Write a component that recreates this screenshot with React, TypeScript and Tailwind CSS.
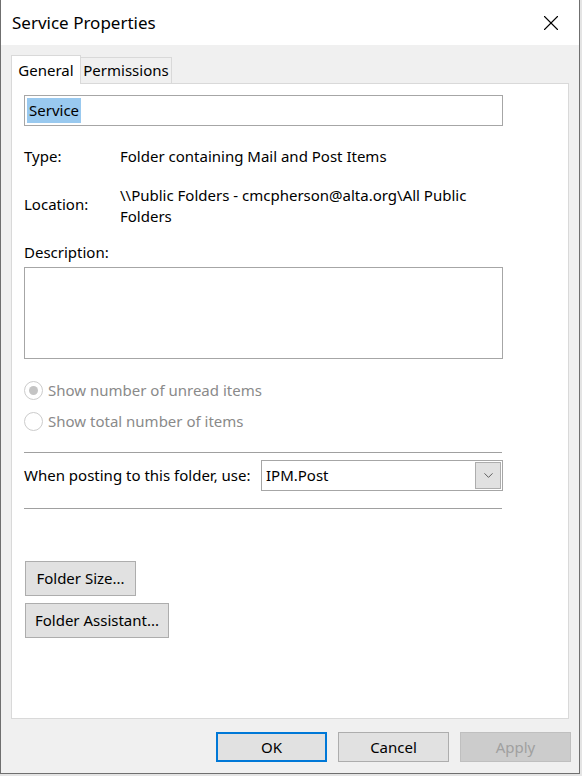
import { X, ChevronDown } from "lucide-react";

const font = "font-['Segoe_UI','Noto_Sans','Open_Sans',sans-serif]";

function Radio({ checked, label }: { checked?: boolean; label: string }) {
  return (
    <div className="flex items-center h-[22px]">
      <span className="w-[19px] h-[19px] rounded-full border border-[#cccccc] bg-white flex items-center justify-center">
        {checked && <span className="w-[9px] h-[9px] rounded-full bg-[#c4c4c4]" />}
      </span>
      <span className="ml-[5px] text-[15px] text-[#8a8a8a]">{label}</span>
    </div>
  );
}

function DialogButton({
  label,
  variant = "normal",
}: {
  label: string;
  variant?: "normal" | "default" | "disabled";
}) {
  const base = "h-[30px] w-[111px] text-[15px] flex items-center justify-center";
  if (variant === "default")
    return <button className={`${base} bg-[#e1e1e1] border-2 border-[#0078d7] text-black`}>{label}</button>;
  if (variant === "disabled")
    return <button className={`${base} bg-[#cccccc] border border-[#bfbfbf] text-[#a0a0a0]`}>{label}</button>;
  return <button className={`${base} bg-[#e1e1e1] border border-[#adadad] text-black`}>{label}</button>;
}

export default function App() {
  return (
    <div className={`w-[582px] h-[776px] bg-[#e4e4e4] ${font}`}>
      <div className="w-[580px] h-[774px] border-x border-b border-[#6f6f6f] flex flex-col bg-[#f0f0f0]">
        {/* title bar */}
        <div className="h-[45px] bg-white flex items-center justify-between pl-[11px] pr-[15px] shrink-0">
          <span className="text-[17px] text-black">Service Properties</span>
          <X className="w-[26px] h-[26px] text-black" strokeWidth={1} />
        </div>

        <div className="flex-1 flex flex-col pl-[10px] pr-[8px]">
          {/* tabs */}
          <div className="flex items-end mt-[10px] h-[29px] relative z-10">
            <div className="h-[29px] w-[70px] bg-white border border-b-0 border-[#d9d9d9] flex items-center justify-center text-[15px] text-black">
              General
            </div>
            <div className="h-[27px] w-[91px] bg-[#f0f0f0] border border-l-0 border-[#d9d9d9] flex items-center justify-center text-[15px] text-black">
              Permissions
            </div>
          </div>

          {/* panel */}
          <div className="h-[636px] mr-[2px] bg-white border border-[#d9d9d9] -mt-px pl-[12px] flex flex-col text-[15px] text-black">
            <div className="mt-[11px] w-[479px] h-[31px] border border-[#a6a6a6] flex items-center px-[2px]">
              <span className="bg-[#99c9ef] h-[25px] flex items-center px-[2px]">Service</span>
            </div>

            <div className="mt-[20px] flex h-[20px] items-center">
              <span className="w-[96px]">Type:</span>
              <span>Folder containing Mail and Post Items</span>
            </div>

            <div className="mt-[19px] flex items-center">
              <span className="w-[96px] -mt-[3px]">Location:</span>
              <span className="w-[370px] leading-[21px]">
                \\Public Folders - cmcpherson@alta.org\All Public Folders
              </span>
            </div>

            <div className="mt-[15px] h-[20px] flex items-center">Description:</div>
            <div className="mt-[5px] w-[479px] h-[92px] border border-[#a6a6a6]" />

            <div className="mt-[20px] flex flex-col gap-[9px]">
              <Radio checked label="Show number of unread items" />
              <Radio label="Show total number of items" />
            </div>

            <div className="mt-[20px] w-[478px] h-px bg-[#a0a0a0]" />

            <div className="mt-[7px] flex items-center">
              <span className="w-[237px]">When posting to this folder, use:</span>
              <div className="w-[242px] h-[31px] border border-[#a6a6a6] flex items-center justify-between pl-[4px] pr-px">
                <span>IPM.Post</span>
                <span className="w-[26px] h-[27px] bg-[#e1e1e1] border border-[#adadad] flex items-center justify-center">
                  <ChevronDown className="w-[15px] h-[15px] text-[#333333]" strokeWidth={1.2} />
                </span>
              </div>
            </div>

            <div className="mt-[17px] w-[478px] h-px bg-[#a0a0a0]" />

            <div className="mt-[52px] ml-px flex">
              <button className="h-[35px] w-[111px] bg-[#e1e1e1] border border-[#adadad] text-[15px]">
                Folder Size...
              </button>
            </div>
            <div className="mt-[7px] ml-px flex">
              <button className="h-[35px] w-[144px] bg-[#e1e1e1] border border-[#adadad] text-[15px]">
                Folder Assistant...
              </button>
            </div>
          </div>

          {/* footer */}
          <div className="mt-[13px] flex justify-end gap-[11px]">
            <DialogButton label="OK" variant="default" />
            <DialogButton label="Cancel" />
            <DialogButton label="Apply" variant="disabled" />
          </div>
        </div>
      </div>
    </div>
  );
}
